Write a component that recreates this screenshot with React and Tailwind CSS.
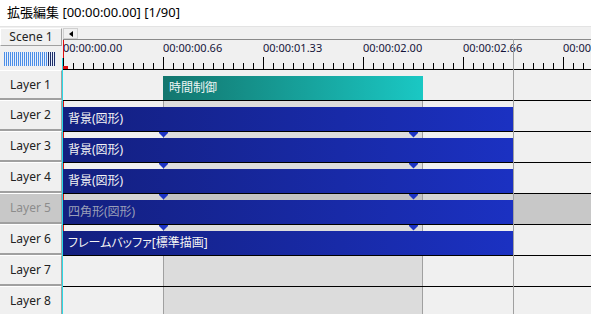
import React from "react"

const LAYERS = [
    { n: 1, kind: "time", label: "時間制御" },
    { n: 2, kind: "bar", label: "背景(図形)", marks: false },
    { n: 3, kind: "bar", label: "背景(図形)", marks: true },
    { n: 4, kind: "bar", label: "背景(図形)", marks: true },
    { n: 5, kind: "bar", label: "四角形(図形)", marks: true, off: true },
    { n: 6, kind: "bar", label: "フレームバッファ[標準描画]", marks: true },
    { n: 7, kind: "empty" },
    { n: 8, kind: "empty" },
]

const RULER = ["00:00:00.00", "00:00:00.66", "00:00:01.33", "00:00:02.00", "00:00:02.66", "00:00:03.33"]

// little blue marker that sits on top of an object
const Mark = ({ left }) => (
    <svg className={`absolute top-0 ${left}`} width="9" height="6" viewBox="0 0 9 6">
        <polygon points="0,0 9,0 9,1 4.5,5.5 0,1" fill="#1c33c4" />
    </svg>
)

const Range = ({ off }) => (
    <div className="flex h-full">
        <div className={`w-[100px] shrink-0 ${off ? "bg-[#d4d4d4]" : ""}`}></div>
        <div className={`w-[260px] shrink-0 border-x border-[#a0a0a0] ${off ? "bg-[#c2c2c2]" : "bg-[#dcdcdc]"}`}></div>
        <div className={`w-[90px] shrink-0 ${off ? "bg-[#d4d4d4]" : ""}`}></div>
        <div className="flex-1"></div>
    </div>
)

const Header = () => (
    <div className="flex h-[43px]">
        <div className="w-[62px] shrink-0 flex flex-col">
            <div className="mt-px h-[18px] flex items-center justify-center bg-[#f0f0f0] border-t border-l border-white border-r border-b border-r-[#a0a0a0] border-b-[#a0a0a0] text-[12px] text-[#222]">
                Scene 1
            </div>
            <div className="mt-[6px] ml-[4px] h-[14px] w-[52px] flex gap-px bg-[#e8f0fb]">
                {Array.from({ length: 26 }).map((_, i) => (
                    <span key={i} className={`w-px h-full ${i > 21 ? "bg-[#1d2c66]" : "bg-[#4a8de6]"}`}></span>
                ))}
            </div>
        </div>
        <div className="w-px shrink-0 flex flex-col justify-end">
            <div className="h-[12px] bg-[#2bd9e6]"></div>
        </div>
        <div className="flex-1 min-w-0 flex flex-col">
            <div className="mt-px h-[12px] flex border-b border-[#8a8a8a]">
                <div className="w-[15px] h-[11px] border border-[#cfcfcf] bg-[#f0f0f0] flex items-center justify-center">
                    <div className="border-y-[3px] border-y-transparent border-r-[4px] border-r-black"></div>
                </div>
                <div className="flex-1 bg-[#f0f0f0]"></div>
            </div>
            <div className="relative h-[30px] border-b border-black flex flex-col overflow-hidden">
                <div className="mt-px flex h-[14px]">
                    {RULER.map((t) => (
                        <div key={t} className="w-[100px] shrink-0 text-[11px] leading-[14px] text-[#15153a] whitespace-nowrap">{t}</div>
                    ))}
                </div>
                <div className="mt-auto h-[12px] flex items-end">
                    {Array.from({ length: 54 }).map((_, i) => (
                        <div key={i} className={`w-[10px] shrink-0 border-l border-black ${i % 10 === 0 ? "h-[12px]" : "h-[6px]"}`}></div>
                    ))}
                </div>
                <div className="absolute left-0 top-0 h-[18px] w-px bg-[#e01010]"></div>
                <div className="absolute left-0 bottom-0 w-[5px] h-[3px] bg-[#e01010]"></div>
            </div>
        </div>
    </div>
)

const Row = ({ layer }) => {
    const first = layer.n === 1
    const off = layer.off
    return (
        <div className={`flex ${first ? "h-[30px]" : "h-[31px]"} ${off ? "bg-[#c8c8c8]" : ""}`}>
            <div className="w-[62px] shrink-0 flex">
                <div className={`flex-1 flex items-center justify-center border-t border-white border-r border-r-[#a0a0a0] border-b-2 border-b-[#a0a0a0] text-[12px] ${off ? "bg-[#c8c8c8] text-[#8c8c8c]" : "bg-[#f0f0f0] text-[#222]"}`}>
                    Layer {layer.n}
                </div>
            </div>
            <div className="w-px shrink-0 bg-[#2bd9e6]"></div>
            <div className={`flex-1 min-w-0 flex flex-col ${first ? "" : "border-t border-black"}`}>
                {layer.kind === "empty" ? (
                    <Range />
                ) : (
                    <>
                        <div className="relative h-[6px]">
                            {first ? null : <Range off={off} />}
                            {layer.kind === "bar" && <div className="absolute left-0 top-0 h-full w-px bg-[#e01010]"></div>}
                            {layer.marks && <Mark left="left-[96px]" />}
                            {layer.marks && <Mark left="left-[346px]" />}
                        </div>
                        {first ? (
                            <div className="flex h-[24px]">
                                <div className="w-[100px] shrink-0"></div>
                                <div className="w-[260px] shrink-0 flex items-center pl-[6px] bg-linear-to-r from-[#12766e] to-[#1ac8c4] text-[12px] text-[#eef6f5] [font-feature-settings:'palt']">
                                    {layer.label}
                                </div>
                            </div>
                        ) : (
                            <div className="flex h-[24px]">
                                <div className={`w-[450px] shrink-0 flex items-center pl-[5px] whitespace-nowrap bg-linear-to-r from-[#131f7f] to-[#1b31c2] text-[12px] [font-feature-settings:'palt'] ${off ? "text-[#9a9fb8]" : "text-[#f4f4f4]"}`}>
                                    {layer.label}
                                </div>
                            </div>
                        )}
                    </>
                )}
            </div>
        </div>
    )
}

export default function App() {
    return (
        <div className="relative w-[591px] h-[314px] overflow-hidden bg-[#f0f0f0] text-black font-[family-name:'Noto_Sans','Noto_Sans_CJK_JP',sans-serif]">
            <div className="h-[27px] bg-white border-b border-[#e3e3e3] px-[7px] flex items-center text-[13px]">
                拡張編集 [00:00:00.00] [1/90]
            </div>
            <Header />
            {LAYERS.map((l) => (
                <Row key={l.n} layer={l} />
            ))}
            <div className="absolute left-[513px] top-[39px] bottom-0 w-px bg-[#a0a0a0]"></div>
        </div>
    )
}
